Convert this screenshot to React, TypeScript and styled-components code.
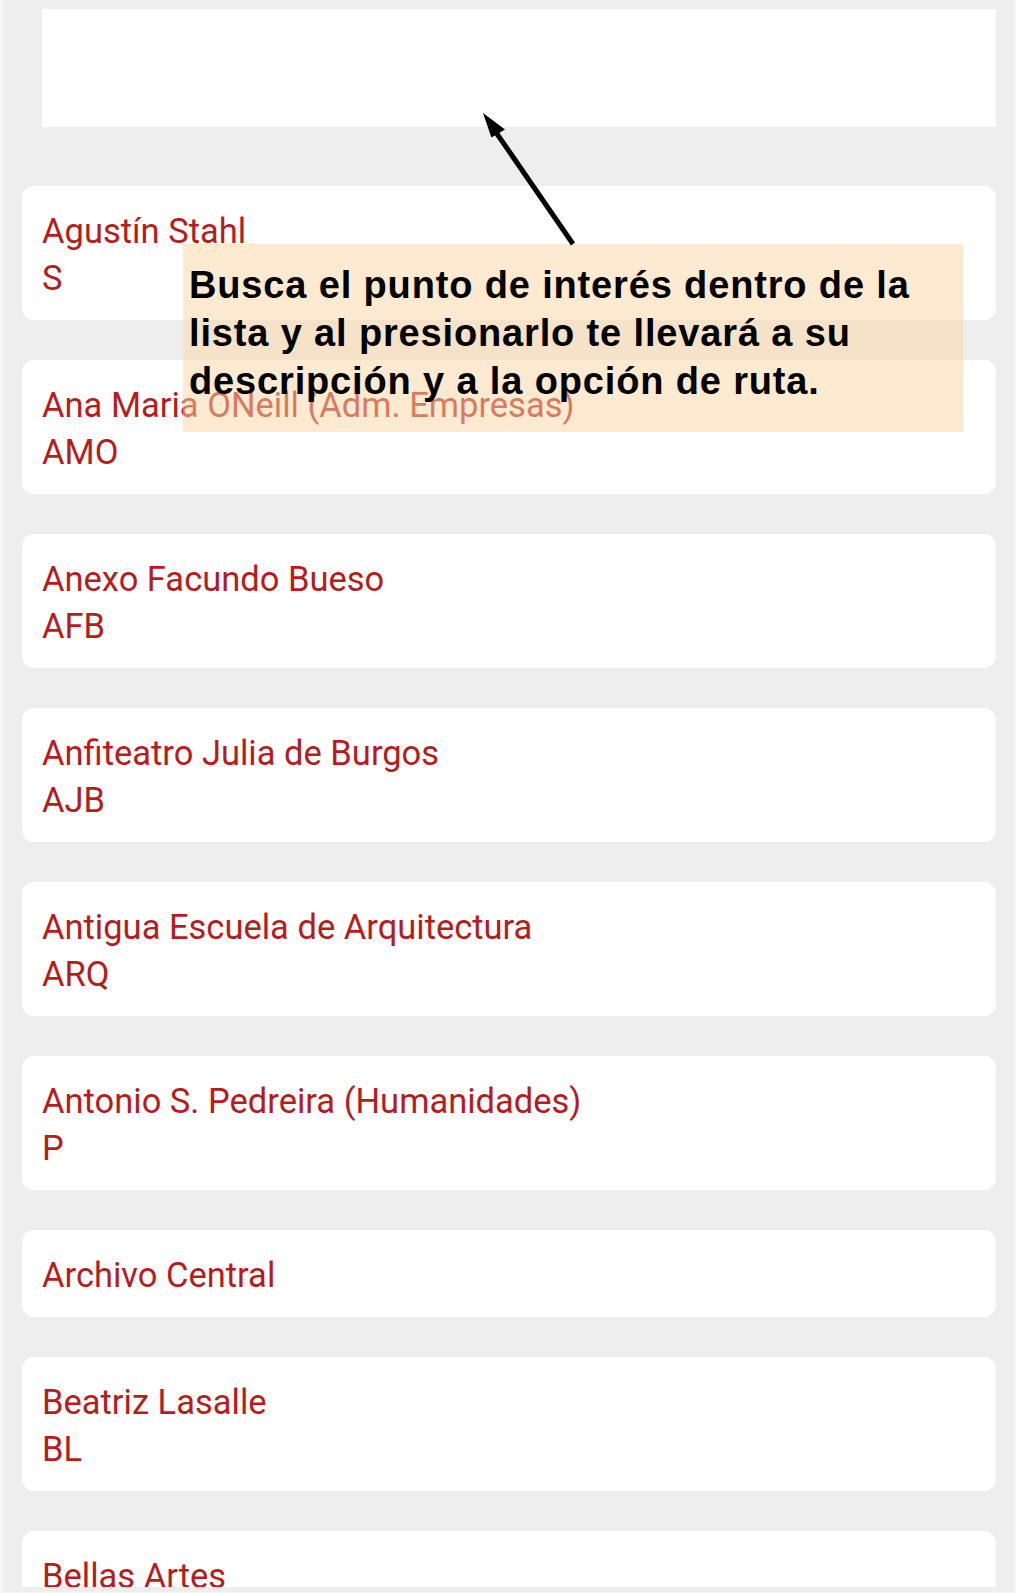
import React from "react";
import styled, { createGlobalStyle } from "styled-components";

const GlobalStyle = createGlobalStyle`
  html, body {
    margin: 0;
    padding: 0;
    background: #f6f6f6;
  }
  * { box-sizing: border-box; }
`;

const Frame = styled.div`
  position: relative;
  margin-left: 3px;
  width: 1011px;
  height: 1592px;
  background: #eeeeee;
  padding-bottom: 5px;
  display: flex;
  flex-direction: column;
`;

const ListArea = styled.div`
  flex: 1;
  overflow: hidden;
  padding: 9px 18px 0 19px;
  display: flex;
  flex-direction: column;
`;

const SearchBox = styled.div`
  margin-left: 20px;
  height: 118px;
  background: #ffffff;
  flex-shrink: 0;
`;

const Cards = styled.div`
  margin-top: 59px;
  display: flex;
  flex-direction: column;
  gap: 40px;
`;

const Card = styled.div`
  flex-shrink: 0;
  background: #ffffff;
  border-radius: 12px;
  padding: 22px 20px 18px 20px;
  font-family: Roboto, "Liberation Sans", sans-serif;
  font-size: 34.5px;
  line-height: 47px;
  color: #b71c1c;
`;

const Line = styled.div`
  white-space: nowrap;
`;

const Tip = styled.div`
  position: absolute;
  left: 180px;
  top: 244px;
  width: 780px;
  height: 188px;
  background: rgba(251, 213, 161, 0.5);
  padding: 17px 6px 0 6px;
  font-family: "Liberation Sans", Arial, sans-serif;
  font-weight: 700;
  font-size: 38px;
  letter-spacing: 0.85px;
  line-height: 48px;
  color: #000000;
`;

const ArrowSvg = styled.svg`
  position: absolute;
  left: 0;
  top: 0;
  pointer-events: none;
`;

const places: { name: string; code?: string }[] = [
  { name: "Agustín Stahl", code: "S" },
  { name: "Ana Maria ONeill (Adm. Empresas)", code: "AMO" },
  { name: "Anexo Facundo Bueso", code: "AFB" },
  { name: "Anfiteatro Julia de Burgos", code: "AJB" },
  { name: "Antigua Escuela de Arquitectura", code: "ARQ" },
  { name: "Antonio S. Pedreira (Humanidades)", code: "P" },
  { name: "Archivo Central" },
  { name: "Beatriz Lasalle", code: "BL" },
  { name: "Bellas Artes", code: "BA" },
];

export default function App() {
  return (
    <>
      <GlobalStyle />
      <Frame>
        <ListArea>
          <SearchBox />
          <Cards>
            {places.map((p) => (
              <Card key={p.name}>
                <Line>{p.name}</Line>
                {p.code && <Line>{p.code}</Line>}
              </Card>
            ))}
          </Cards>
        </ListArea>
        <Tip>
          Busca el punto de interés dentro de la lista y al presionarlo te llevará a su
          descripción y a la opción de ruta.
        </Tip>
        <ArrowSvg width="1011" height="300" viewBox="0 0 1011 300">
          <line x1="570" y1="244" x2="490" y2="128" stroke="#000" strokeWidth="5" />
          <polygon points="480,113 488.4,137.6 502,129.6" fill="#000" />
        </ArrowSvg>
      </Frame>
    </>
  );
}
